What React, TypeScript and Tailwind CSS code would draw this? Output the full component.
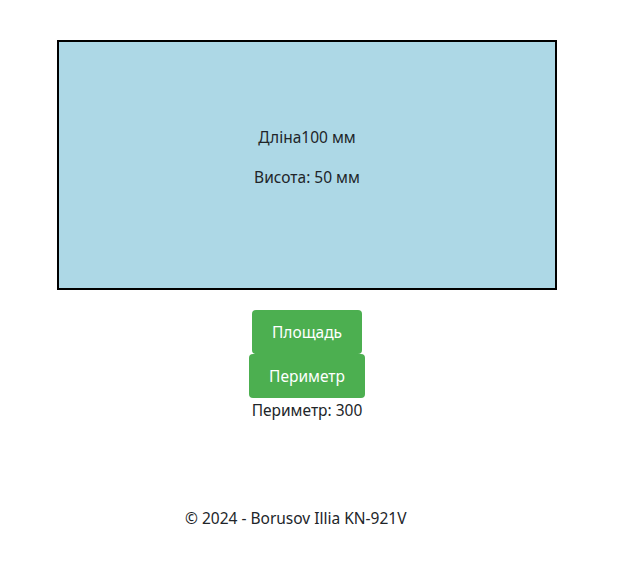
export default function App() {
  return (
    <div className="w-[614px] bg-white text-[#212529] text-[15.5px] leading-6" style={{ fontFamily: '"Noto Sans", "Open Sans", sans-serif' }}>
      <div className="pt-10 flex flex-col items-center">
        <div className="w-[500px] h-[250px] border-2 border-black bg-[#add8e6] flex flex-col items-center justify-center">
          <p className="mb-4">Дліна100 мм</p>
          <p className="mb-4">Висота: 50 мм</p>
        </div>
        <div className="mt-5 flex flex-col items-center">
          <button className="bg-[#4caf50] text-white rounded px-5 py-2.5 leading-6">Площадь</button>
          <button className="bg-[#4caf50] text-white rounded px-5 py-2.5 leading-6">Периметр</button>
          <p>Периметр: 300</p>
        </div>
      </div>
      <div className="mt-[84px] pl-[185px]">
        <p>© 2024 - Borusov Illia KN-921V</p>
      </div>
    </div>
  );
}
